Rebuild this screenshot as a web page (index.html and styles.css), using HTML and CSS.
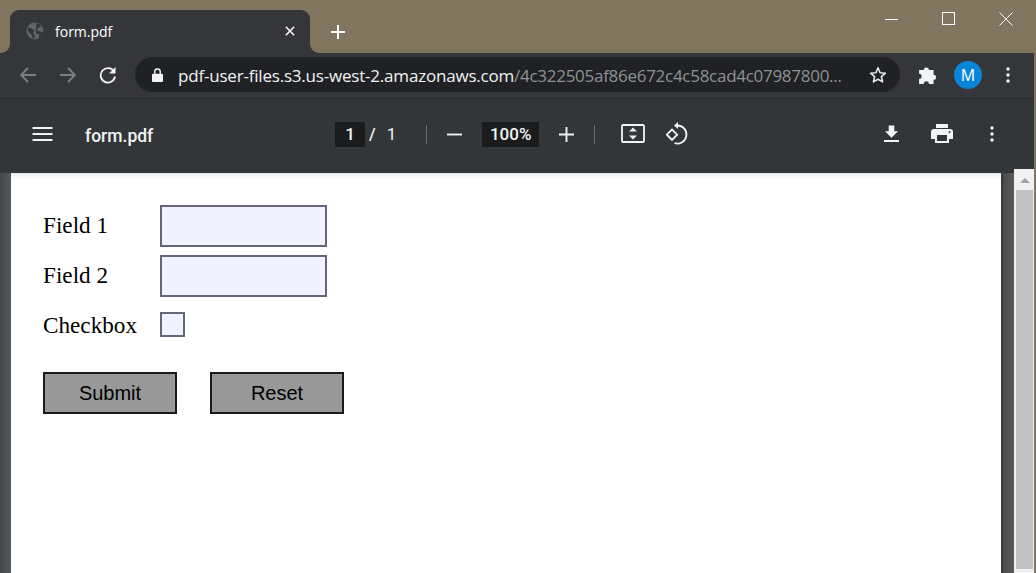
FILE: index.html
```html
<!DOCTYPE html>
<html lang="en">
<head>
<meta charset="utf-8">
<title>form.pdf</title>
<link rel="stylesheet" href="styles.css">
</head>
<body>
<div class="window">
  <header class="strip">
    <div class="tab">
      <svg class="globe" viewBox="0 0 18 18"><circle cx="9" cy="9" r="8.5" fill="#5f6368"/><path d="M2 5.500l4 1 2 2.500-1 2 1.500 2v3l-2 .5-1-4-3.500-3.500zM10 1l4 1.500 1 2-3 1.500-1.500 2.500 4 1 3 .5-1.500 3.500-2.500 2.500-1-.5 1-3-3.500-1.500-.5-3 1-3z" fill="#35363a"/></svg>
      <span class="tab-title">form.pdf</span>
      <svg class="tab-close" viewBox="0 0 12 12"><path d="M1 1l10 10M11 1L1 11" stroke="#fff" stroke-width="1.800"/></svg>
    </div>
    <svg class="new-tab" viewBox="0 0 14 14"><path d="M7 0v14M0 7h14" stroke="#fff" stroke-width="2"/></svg>
    <div class="win-controls">
      <svg viewBox="0 0 14 14"><path d="M0 7.500h13" stroke="#fff" stroke-width="1"/></svg>
      <svg viewBox="0 0 14 14"><rect x=".5" y=".5" width="12" height="12" fill="none" stroke="#fff"/></svg>
      <svg viewBox="0 0 14 14"><path d="M.5.500l13 13M13.500.500l-13 13" stroke="#fff" stroke-width="1"/></svg>
    </div>
  </header>

  <nav class="toolbar">
    <svg class="nav-icon" viewBox="0 0 18 18"><path d="M17 9H2M9 2L2 9l7 7" fill="none" stroke="#7d7f83" stroke-width="1.800"/></svg>
    <svg class="nav-icon" viewBox="0 0 18 18"><path d="M1 9h15M9 2l7 7-7 7" fill="none" stroke="#7d7f83" stroke-width="1.800"/></svg>
    <svg class="nav-icon" viewBox="0 0 18 18"><path d="M15 5.500A7.200 7.200 0 1 0 16 10.500" fill="none" stroke="#f1f3f4" stroke-width="1.800"/><path d="M16.500 1v6.500H10z" fill="#f1f3f4"/></svg>
    <div class="omnibox">
      <svg class="lock" viewBox="0 0 12 15"><path d="M1 6h10a1 1 0 0 1 1 1v7a1 1 0 0 1-1 1H1a1 1 0 0 1-1-1V7a1 1 0 0 1 1-1z" fill="#f1f3f4"/><path d="M3 6.500V4a3 3 0 0 1 6 0v2.500" fill="none" stroke="#f1f3f4" stroke-width="1.500"/></svg>
      <span class="url"><span class="host">pdf-user-files.s3.us-west-2.amazonaws.com</span><span class="path">/4c322505af86e672c4c58cad4c07987800...</span></span>
      <svg class="star" viewBox="0 0 18 18"><path d="M9 1.800l2.100 4.900 5.300.5-4 3.500 1.200 5.200L9 13.200l-4.600 2.700 1.200-5.200-4-3.500 5.300-.5z" fill="none" stroke="#e8eaed" stroke-width="1.600" stroke-linejoin="round"/></svg>
    </div>
    <svg class="ext" viewBox="0 0 18 18"><path d="M1 4.500h4.200a2.300 2.300 0 1 1 4.600 0H14v4.200a2.300 2.300 0 1 1 0 4.600V17H9.800a2.300 2.300 0 0 0-4.600 0H1v-4.500a2.300 2.300 0 0 0 0-4.600z" fill="#f1f3f4"/></svg>
    <div class="avatar">M</div>
    <svg class="dots" viewBox="0 0 4 16"><circle cx="2" cy="2" r="1.700"/><circle cx="2" cy="8" r="1.700"/><circle cx="2" cy="14" r="1.700"/></svg>
  </nav>

  <section class="pdfbar">
    <svg class="menu" viewBox="0 0 20 16"><path d="M0 2h20M0 8h20M0 14h20" stroke="#f1f3f4" stroke-width="2"/></svg>
    <span class="doc-title">form.pdf</span>
    <div class="pager">
      <span class="field page-field">1</span>
      <span class="slash">/</span>
      <span class="total">1</span>
      <span class="sep sep-a"></span>
      <svg class="zoom-btn minus" viewBox="0 0 16 16"><path d="M0 8h16" stroke="#f1f3f4" stroke-width="2"/></svg>
      <span class="field zoom-field">100%</span>
      <svg class="zoom-btn plus" viewBox="0 0 16 16"><path d="M0 8h16M8 0v16" stroke="#f1f3f4" stroke-width="2"/></svg>
      <span class="sep sep-b"></span>
      <svg class="fit" viewBox="0 0 24 20"><rect x="1" y="1" width="22" height="17" rx="1" fill="none" stroke="#f1f3f4" stroke-width="1.800"/><path d="M12 3.500l4 4H8zM12 15.500l-4-4h8z" fill="#f1f3f4"/></svg>
      <svg class="rotate" viewBox="0 0 24 24"><path d="M.8 12.700L6 7.500l5.200 5.200L6 17.900z" fill="none" stroke="#f1f3f4" stroke-width="1.800"/><path d="M11 3.500A9 9 0 1 1 8.500 21" fill="none" stroke="#f1f3f4" stroke-width="1.800"/><path d="M12 0v7L8 3.500z" fill="#f1f3f4"/></svg>
    </div>
    <div class="pdf-actions">
      <svg class="download" viewBox="0 0 16 18"><path d="M5 0h6v6h4l-7 7-7-7h4zM0 15.500h16V17.500H0z" fill="#f1f3f4"/></svg>
      <svg class="print" viewBox="0 0 22 20"><path d="M5 0h12v4H5zM3 5h16a3 3 0 0 1 3 3v7h-4v4H4v-4H0V8a3 3 0 0 1 3-3z" fill="#f1f3f4"/><rect x="6" y="11" width="10" height="6" fill="#323639"/><circle cx="18.500" cy="8" r="1" fill="#323639"/></svg>
      <svg class="dots" viewBox="0 0 4 16"><circle cx="2" cy="2" r="1.700"/><circle cx="2" cy="8" r="1.700"/><circle cx="2" cy="14" r="1.700"/></svg>
    </div>
  </section>

  <main class="viewer">
    <div class="gutter gutter-left"></div>
    <article class="page">
      <div class="row row-1"><label>Field 1</label><span class="input"></span></div>
      <div class="row row-2"><label>Field 2</label><span class="input"></span></div>
      <div class="row row-3"><label>Checkbox</label><span class="check"></span></div>
      <div class="buttons">
        <span class="btn">Submit</span>
        <span class="btn">Reset</span>
      </div>
    </article>
    <div class="gutter gutter-right"></div>
    <div class="scrollbar">
      <div class="arrow"></div>
      <div class="thumb"></div>
    </div>
  </main>
</div>
</body>
</html>
```

FILE: styles.css
```css
* { box-sizing: border-box; }
html, body { margin: 0; height: 100%; overflow: hidden; }
body { font-family: "Open Sans", "Noto Sans", sans-serif; background: #80755f; }
svg { display: block; flex: none; }

.window { width: 1036px; height: 573px; display: flex; flex-direction: column; padding-right: 2px; background: #80755f; }

/* tab strip */
.strip { height: 53px; flex: none; background: #80755f; display: flex; align-items: flex-end; padding-left: 10px; position: relative; }
.tab { width: 300px; height: 43px; background: #35363a; border-radius: 9px 9px 0 0; display: flex; align-items: center; padding: 0 15px 0 16px; color: #fff; position: relative; }
.tab::before, .tab::after { content: ""; position: absolute; bottom: 0; width: 9px; height: 9px; }
.tab::before { left: -9px; background: radial-gradient(circle at 0 0, transparent 8.500px, #35363a 9px); }
.tab::after { right: -9px; background: radial-gradient(circle at 100% 0, transparent 8.500px, #35363a 9px); }
.globe { width: 18px; height: 18px; margin-top: -1px; }
.tab-title { font-size: 14px; margin-left: 11px; flex: 1; margin-top: -1px; }
.tab-close { width: 10px; height: 10px; margin-top: -1px; }
.new-tab { width: 14px; height: 14px; margin: 0 0 14px 21px; }
.win-controls { margin-left: auto; align-self: flex-start; display: flex; gap: 43px; padding: 12px 21px 0 0; }
.win-controls svg { width: 14px; height: 14px; }

/* browser toolbar */
.toolbar { height: 46px; flex: none; background: #35363a; border-bottom: 1px solid #2a2b2e; display: flex; align-items: center; padding: 0 0 2px 19px; }
.nav-icon { width: 18px; height: 18px; margin-right: 22px; }
.nav-icon:nth-of-type(3) { margin-right: 18px; }
.omnibox { width: 765px; height: 35px; background: #202124; border-radius: 18px; display: flex; align-items: center; padding: 0 13px 0 17px; }
.lock { width: 11px; height: 14px; }
.url { flex: 1; font-size: 17px; margin: 2px 0 0 15px; white-space: nowrap; overflow: hidden; letter-spacing: -.2px; }
.host { color: #f1f3f4; }
.path { color: #8e9195; letter-spacing: -.28px; }
.star { width: 18px; height: 18px; }
.ext { width: 20px; height: 20px; margin-left: 18px; }
.avatar { width: 28px; height: 28px; border-radius: 50%; background: #0b85d8; color: #fff; font-size: 16px; display: flex; align-items: center; justify-content: center; margin-left: 16px; }
.toolbar .dots { margin-left: 24px; }
.dots { width: 4px; height: 16px; fill: #f1f3f4; }

/* pdf toolbar */
.pdfbar { height: 74px; flex: none; background: #323639; display: flex; align-items: center; color: #f1f3f4; padding: 0 0 4px 32px; font-family: Roboto, sans-serif; }
.menu { width: 21px; height: 16px; }
.doc-title { font-size: 17.500px; font-weight: 500; margin: 4px 0 0 32px; width: 250px; }
.pager { display: flex; align-items: center; font-size: 17px; font-weight: 500; }
.field { background: #191b1c; height: 25px; display: flex; align-items: center; justify-content: center; color: #f1f3f4; }
.page-field { width: 30px; }
.slash { margin-left: 4px; }
.total { margin-left: 11px; font-weight: 400; }
.sep { width: 1px; height: 19px; background: #6b6f72; }
.sep-a { margin-left: 30px; }
.minus { margin-left: 20px; }
.zoom-btn { width: 15px; height: 15px; }
.zoom-field { width: 57px; margin-left: 20px; }
.plus { margin-left: 20px; }
.sep-b { margin-left: 20px; }
.fit { width: 24px; height: 20px; margin-left: 26px; }
.rotate { width: 24px; height: 24px; margin-left: 21px; }
.pdf-actions { margin-left: auto; display: flex; align-items: center; padding-right: 40px; }
.download { width: 15px; height: 18px; }
.print { width: 22px; height: 20px; margin-left: 32px; }
.pdf-actions .dots { margin-left: 37px; }

/* viewer */
.viewer { flex: 1; min-height: 0; display: flex; background: #525659; }
.gutter-left { width: 11px; background: linear-gradient(90deg, #43474a, #565a5d); }
.gutter-right { width: 13px; background: linear-gradient(90deg, #333639, #4c5053 30%, #565a5d); }
.page { width: 990px; background: #fff; padding: 32px 0 0 32px; box-shadow: inset 0 6px 6px -5px rgba(0,0,0,.14); font-family: "Liberation Serif", serif; font-size: 23.200px; color: #000; }
.row { display: flex; align-items: center; height: 42px; margin-bottom: 8px; }
.row label { width: 117px; margin-top: -2px; }
.input { width: 167px; height: 42px; background: #f0f3ff; border: 2px solid #66667a; }
.row-3 { height: 24px; margin: 16px 0 0; }
.row-3 label { margin-top: 0; }
.check { width: 25px; height: 25px; margin-top: -2px; background: #f0f3ff; border: 2px solid #66667a; }
.buttons { display: flex; gap: 33px; margin-top: 35px; }
.btn { width: 134px; height: 42px; background: #999; border: 2px solid #1a1a1a; font-family: "Liberation Sans", sans-serif; font-size: 20px; display: flex; align-items: center; justify-content: center; }
.scrollbar { width: 20px; margin-top: -4px; background: #f1f1f1; padding: 0 1px 0 2px; position: relative; }
.arrow { height: 21px; display: flex; justify-content: center; padding-top: 9px; }
.arrow::before { content: ""; height: 0; border-bottom: 5px solid #a3a3a3; border-left: 5px solid transparent; border-right: 5px solid transparent; }
.thumb { height: 379px; background: #c1c1c1; }
```
